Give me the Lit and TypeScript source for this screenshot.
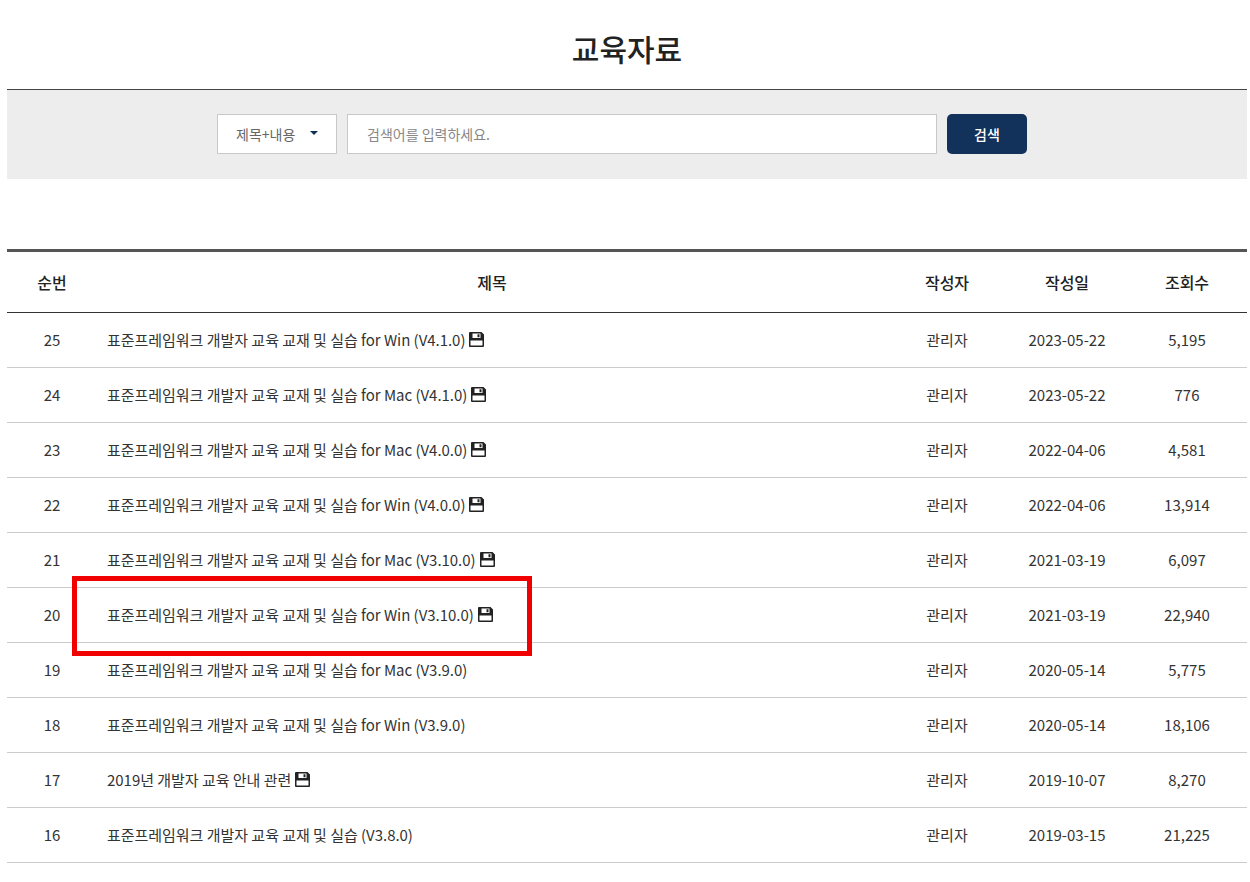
import { LitElement, html, css, svg } from "lit";
import { customElement } from "lit/decorators.js";

interface Row { no: number; title: string; date: string; views: string; file: boolean; }

const BASE = "표준프레임워크 개발자 교육 교재 및 실습";
const rows: Row[] = [
  { no: 25, title: `${BASE} for Win (V4.1.0)`, date: "2023-05-22", views: "5,195", file: true },
  { no: 24, title: `${BASE} for Mac (V4.1.0)`, date: "2023-05-22", views: "776", file: true },
  { no: 23, title: `${BASE} for Mac (V4.0.0)`, date: "2022-04-06", views: "4,581", file: true },
  { no: 22, title: `${BASE} for Win (V4.0.0)`, date: "2022-04-06", views: "13,914", file: true },
  { no: 21, title: `${BASE} for Mac (V3.10.0)`, date: "2021-03-19", views: "6,097", file: true },
  { no: 20, title: `${BASE} for Win (V3.10.0)`, date: "2021-03-19", views: "22,940", file: true },
  { no: 19, title: `${BASE} for Mac (V3.9.0)`, date: "2020-05-14", views: "5,775", file: false },
  { no: 18, title: `${BASE} for Win (V3.9.0)`, date: "2020-05-14", views: "18,106", file: false },
  { no: 17, title: "2019년 개발자 교육 안내 관련", date: "2019-10-07", views: "8,270", file: true },
  { no: 16, title: `${BASE} (V3.8.0)`, date: "2019-03-15", views: "21,225", file: false },
];

const disk = svg`<path fill-rule="evenodd" d="M1 0H12.5L15 2.5V14A1 1 0 0 1 14 15H1A1 1 0 0 1 0 14V1A1 1 0 0 1 1 0ZM3.5 1.5V6H11.5V1.5ZM8.5 2.2H10.5V5.3H8.5ZM1.5 8.5V13.5H13.5V8.5Z"/>`;

@customElement("app-root")
export class AppRoot extends LitElement {
  static styles = css`
    :host {
      display: block;
      position: relative;
      height: 882px;
      overflow: hidden;
      background: #fff;
      color: #222;
      font-family: "Noto Sans CJK KR", "Noto Sans", sans-serif;
      font-size: 15px;
    }
    .page { padding: 0 3px 0 7px; }
    h1 {
      margin: 0;
      height: 89px;
      box-sizing: border-box;
      padding-top: 25px;
      text-align: center;
      font-size: 30px;
      line-height: 46px;
      font-weight: 500;
      color: #222;
    }
    .search {
      box-sizing: border-box;
      height: 90px;
      border-top: 1px solid #444;
      background: #ededed;
      display: flex;
      justify-content: center;
      gap: 10px;
      padding: 24px 10px 0 0;
    }
    .select, .input {
      box-sizing: border-box;
      height: 40px;
      background: #fff;
      border: 1px solid #c8c8c8;
      display: flex;
      align-items: center;
      color: #666;
      font-size: 14px;
    }
    .select { width: 120px; padding-left: 18px; position: relative; }
    .caret {
      position: absolute;
      left: 92px;
      top: 16px;
      width: 0;
      height: 0;
      border-left: 4.5px solid transparent;
      border-right: 4.5px solid transparent;
      border-top: 4.5px solid #0f2f56;
    }
    .input { width: 590px; padding-left: 19px; color: #888; }
    .btn {
      width: 80px;
      height: 40px;
      border-radius: 5px;
      background: #12325b;
      color: #fff;
      display: flex;
      align-items: center;
      justify-content: center;
      font-weight: 500;
      font-size: 14px;
    }
    table {
      margin-top: 70px;
      width: 1240px;
      border-collapse: separate;
      border-spacing: 0;
      table-layout: fixed;
      border-top: 3px solid #555;
    }
    th {
      height: 61px;
      box-sizing: border-box;
      border-bottom: 1px solid #333;
      font-size: 16px;
      font-weight: 500;
      color: #222;
      padding: 0;
      text-align: center;
    }
    td {
      height: 55px;
      box-sizing: border-box;
      border-bottom: 1px solid #ccc;
      padding: 0 0 1px;
      text-align: center;
      color: #333;
      font-size: 15px;
    }
    td.title {
      text-align: left;
      padding-left: 10px;
      color: #333;
      white-space: nowrap;
      letter-spacing: -0.03px;
    }
    .disk { width: 15px; height: 15px; vertical-align: -1px; margin-left: 4px; fill: #222; }
    .mark {
      position: absolute;
      left: 72px;
      top: 576px;
      width: 460px;
      height: 80px;
      box-sizing: border-box;
      border: 5px solid #f00000;
      pointer-events: none;
    }
  `;

  render() {
    return html`
      <div class="page">
        <h1>교육자료</h1>
        <div class="search">
          <div class="select">제목+내용<span class="caret"></span></div>
          <div class="input">검색어를 입력하세요.</div>
          <div class="btn">검색</div>
        </div>
        <table>
          <colgroup>
            <col style="width:90px" /><col style="width:790px" />
            <col style="width:120px" /><col style="width:120px" /><col style="width:120px" />
          </colgroup>
          <thead>
            <tr><th>순번</th><th>제목</th><th>작성자</th><th>작성일</th><th>조회수</th></tr>
          </thead>
          <tbody>
            ${rows.map(
              (r) => html`<tr>
                <td>${r.no}</td>
                <td class="title">${r.title}${r.file
                  ? html`<svg class="disk" viewBox="0 0 15 15">${disk}</svg>`
                  : ""}</td>
                <td>관리자</td>
                <td>${r.date}</td>
                <td>${r.views}</td>
              </tr>`
            )}
          </tbody>
        </table>
      </div>
      <div class="mark"></div>
    `;
  }
}
